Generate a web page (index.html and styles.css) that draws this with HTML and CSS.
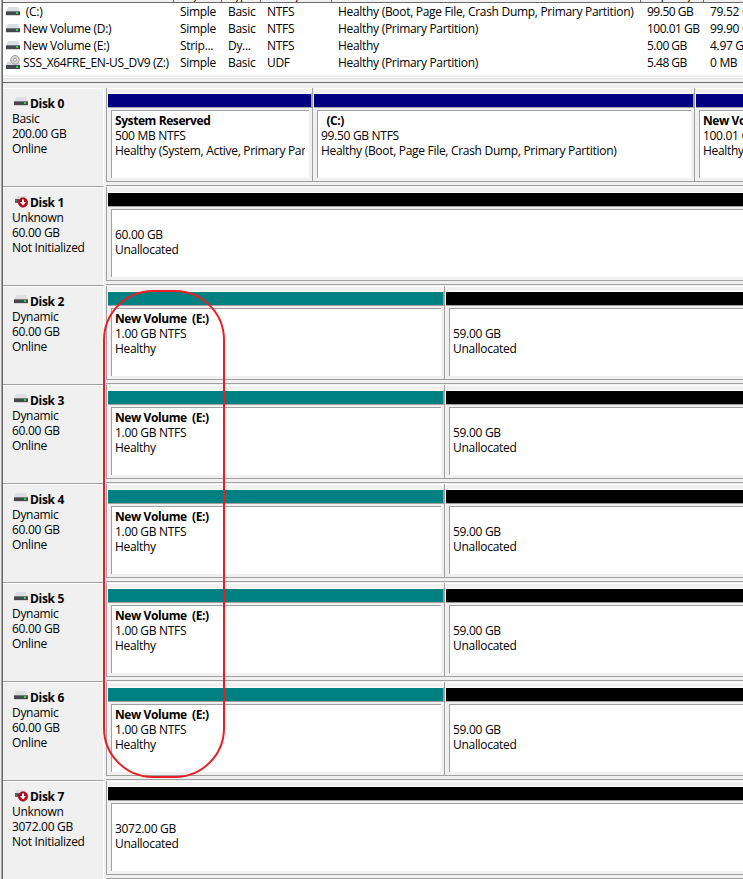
FILE: index.html
```html
<!DOCTYPE html>
<html lang="en">
<head>
<meta charset="utf-8">
<title>Disk Management</title>
<link rel="stylesheet" href="styles.css">
</head>
<body>
<svg class="defs" aria-hidden="true">
  <symbol id="drive" viewBox="0 0 14 9"><path d="M2 0h10l1.500 4H.5z" fill="#dcdee1"/><path d="M0 4h14v4H0z" fill="#45484c"/><path d="M0 4h14v1H0z" fill="#777b80"/><path d="M0 8h14v1H0z" fill="#d0d2d4"/><path d="M10 5h2v2h-2z" fill="#30d64a"/></symbol>
  <symbol id="disc" viewBox="0 0 14 14"><path d="M1 7h12l1 3H0z" fill="#d5d7d9"/><path d="M0 10h14v4H0z" fill="#45484c"/><path d="M10 11h2v2h-2z" fill="#30d64a"/><circle cx="9" cy="4.800" r="4.300" fill="#dadada" stroke="#969696"/><circle cx="9" cy="4.800" r="1.500" fill="#fff" stroke="#999"/></symbol>
  <symbol id="error" viewBox="0 0 14 12"><path d="M2 0h10l1.500 4H.5z" fill="#dcdee1"/><path d="M1 3h4v4H1z" fill="#5c6065"/><circle cx="9" cy="6.500" r="4.700" fill="#b80d20" stroke="#8f0010" stroke-width=".6"/><path d="M8 3.500h2V6h2L9 9.500 6 6h2z" fill="#fff"/></symbol>
</svg>
<div class="app">
  <section class="list">
    <div class="head"><span><b>Volume</b></span><span><b>Layout</b></span><span><b>Type</b></span><span><b>File System</b></span><span><b>Status</b></span><span><b>Capacity</b></span><span><b>Free Space</b></span></div>
    <div class="line"><span class="name"><svg class="drive"><use href="#drive"/></svg>&nbsp;(C:)</span><span>Simple</span><span>Basic</span><span>NTFS</span><span>Healthy (Boot, Page File, Crash Dump, Primary Partition)</span><span class="num">99.50 GB</span><span>79.52 GB</span></div>
    <div class="line"><span class="name"><svg class="drive"><use href="#drive"/></svg>New Volume (D:)</span><span>Simple</span><span>Basic</span><span>NTFS</span><span>Healthy (Primary Partition)</span><span class="num">100.01 GB</span><span>99.90 GB</span></div>
    <div class="line"><span class="name"><svg class="drive"><use href="#drive"/></svg>New Volume (E:)</span><span>Strip...</span><span>Dy...</span><span>NTFS</span><span>Healthy</span><span class="num">5.00 GB</span><span>4.97 GB</span></div>
    <div class="line"><span class="name tight"><svg class="cd"><use href="#disc"/></svg>SSS_X64FRE_EN-US_DV9 (Z:)</span><span>Simple</span><span>Basic</span><span>UDF</span><span>Healthy (Primary Partition)</span><span class="num">5.48 GB</span><span>0 MB</span></div>
  </section>
  <div class="splitter"></div>
  <main class="disks" id="disks"></main>
</div>
<div class="callout"></div>
<script src="disks.js"></script>
</body>
</html>
```
FILE: styles.css
```css
* { box-sizing: border-box; }
body { margin: 0; width: 743px; height: 879px; overflow: hidden; background: #f0f0f0; color: #000; font: 12px/15px "Open Sans", "Noto Sans", sans-serif; letter-spacing: -0.3px; }
.defs { position: absolute; width: 0; height: 0; }
.app { height: 879px; overflow: hidden; border-left: 1px solid #f0f0f0; box-shadow: inset 1px 0 #a0a0a0, inset 2px 0 #696969; padding-left: 2px; }
.list { height: 75px; background: #fff; overflow: hidden; }
.head, .line { display: grid; grid-template-columns: 171px 48px 39px 71px 309px 63px 100px; white-space: nowrap; }
.head { height: 3px; background: #f0f0f0; border-bottom: 1px solid #696969; overflow: hidden; }
.head span { height: 2px; border-right: 1px solid #696969; padding-left: 6px; overflow: hidden; }
.head b { display: block; font-weight: 400; margin-top: -12px; }
.line { height: 17px; line-height: 18px; }
.line span { padding-left: 6px; overflow: hidden; }
.line .num { letter-spacing: -0.5px; }
.line .name { display: flex; align-items: center; gap: 3px; padding-left: 3px; }
.line .tight { overflow: visible; letter-spacing: -0.34px; }
.line .cd { margin-top: -3px; }
svg { flex: none; }
.drive { width: 14px; height: 9px; }
.cd { width: 14px; height: 14px; }
.error { width: 14px; height: 12px; }
.splitter { height: 13px; background: linear-gradient(#f0f0f0 0 2px, #fff 2px 3px, #e3e3e3 3px 4px, #f0f0f0 4px 7px, #696969 7px 8px, #f0f0f0 8px); }
.disk { display: flex; height: 99px; }
.info { width: 101px; border-top: 1px solid #fff; border-right: 1px solid #fff; border-bottom: 1px solid #a0a0a0; padding: 7px 0 0 9px; }
.info h2 { display: flex; align-items: center; gap: 2px; margin: 0; padding-left: 2px; font-size: 12px; line-height: 16px; height: 15px; }
.info h2 svg { margin-bottom: 5px; }
.info h2 .error { margin-bottom: 1px; }
.info p, .box p { margin: 0; white-space: pre; overflow: hidden; }
.graph { flex: 1; margin-left: 2px; display: flex; height: 99px; background: linear-gradient(#fff 0 1px, transparent 1px 97px, #a0a0a0 97px 98px, transparent 98px); min-width: 0; overflow: hidden; }
.volume { flex: none; height: 94px; padding-top: 5px; border-left: 1px solid #a0a0a0; border-bottom: 1px solid #a0a0a0; }
.bar { height: 15px; margin-left: 1px; border-top: 1px solid #fff; border-right: 1px solid #a0a0a0; border-bottom: 1px solid #a0a0a0; }
.primary .bar { background: #000080; }
.striped .bar { background: #008080; }
.free .bar { background: #000; }
.box { margin: 2px 3px 0 4px; height: 68px; padding: 2px 4px 0 3px; border-top: 1px solid #a0a0a0; border-left: 1px solid #a0a0a0; background: #fff; overflow: hidden; }
.box strong { letter-spacing: -0.42px; }
.free .box { padding-top: 17px; }
.callout { position: absolute; left: 103px; top: 290px; width: 122px; height: 488px; border: 2px solid #ed1c24; border-radius: 50px; }
```
FILE: disks.js
```js
const striped = [
  { kind: "striped", width: 338, lines: ["<strong>New Volume  (E:)</strong>", "1.00 GB NTFS", "Healthy"] },
  { kind: "free", width: 400, lines: ["59.00 GB", "Unallocated"] }
];
const disks = [
  { type: "Basic", size: "200.00 GB", state: "Online", volumes: [
    { kind: "primary", width: 206, lines: ["<strong>System Reserved</strong>", "500 MB NTFS", "Healthy (System, Active, Primary Partition)"] },
    { kind: "primary", width: 382, lines: ["<strong>  (C:)</strong>", "99.50 GB NTFS", "Healthy (Boot, Page File, Crash Dump, Primary Partition)"] },
    { kind: "primary", width: 383, lines: ["<strong>New Volume  (D:)</strong>", "100.01 GB NTFS", "Healthy (Primary Partition)"] }
  ] },
  { type: "Unknown", size: "60.00 GB", state: "Not Initialized", volumes: [{ kind: "free", width: 800, lines: ["60.00 GB", "Unallocated"] }] },
  ...Array.from({ length: 5 }, () => ({ type: "Dynamic", size: "60.00 GB", state: "Online", volumes: striped })),
  { type: "Unknown", size: "3072.00 GB", state: "Not Initialized", volumes: [{ kind: "free", width: 800, lines: ["3072.00 GB", "Unallocated"] }] }
];
document.getElementById("disks").innerHTML = disks.map((d, i) => {
  const icon = d.type === "Unknown" ? "error" : "drive";
  const volumes = d.volumes.map(v => `<div class="volume ${v.kind}" style="width:${v.width}px"><div class="bar"></div><div class="box">${v.lines.map(l => `<p>${l}</p>`).join("")}</div></div>`).join("");
  return `<article class="disk"><div class="info"><h2><svg class="${icon}"><use href="#${icon}"/></svg>Disk ${i}</h2><p>${d.type}</p><p>${d.size}</p><p>${d.state}</p></div><div class="graph">${volumes}</div></article>`;
}).join("");
```
